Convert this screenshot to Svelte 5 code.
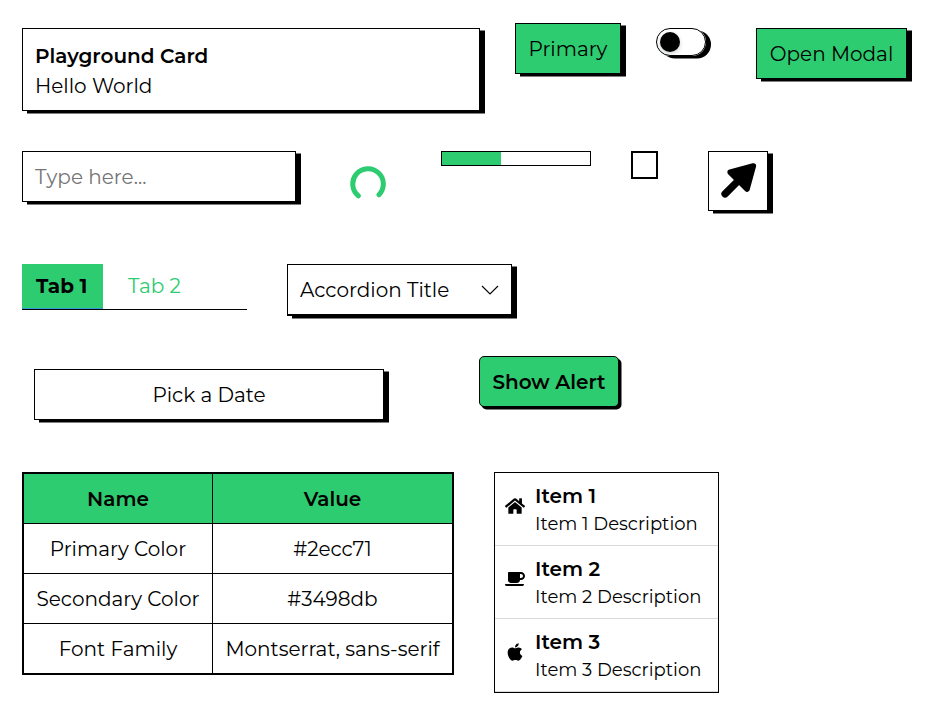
<script>
  const rows = [
    { name: 'Primary Color', value: '#2ecc71' },
    { name: 'Secondary Color', value: '#3498db' },
    { name: 'Font Family', value: 'Montserrat, sans-serif' }
  ];
  const items = [
    { title: 'Item 1', text: 'Item 1 Description' },
    { title: 'Item 2', text: 'Item 2 Description' },
    { title: 'Item 3', text: 'Item 3 Description' }
  ];
</script>

<main>
  <section class="row first">
    <article class="card shadow">
      <div><strong>Playground Card</strong></div>
      <div><span>Hello World</span></div>
    </article>
    <button class="primary shadow"><span>Primary</span></button>
    <div class="toggle shadow"><i></i></div>
    <button class="modal shadow"><span>Open Modal</span></button>
  </section>

  <section class="row second">
    <div class="input shadow"><span>Type here...</span></div>
    <svg class="spinner" width="36" height="36" viewBox="0 0 36 36">
      <path d="M8.3 29.8A15.3 15.3 0 1 1 29 28.7" fill="none" stroke="#2ecc71" stroke-width="5" stroke-linecap="round" />
    </svg>
    <div class="progress"><div></div></div>
    <div class="check"></div>
    <button class="icon shadow">
      <svg width="58" height="58" viewBox="1 1 58 58">
        <path d="M45.3 15L22.2 21.3L39 38Z" fill="#000" stroke="#000" stroke-width="5.6" stroke-linejoin="round" />
        <path d="M17.1 42.9L33 27" stroke="#000" stroke-width="7.4" stroke-linecap="round" />
      </svg>
    </button>
  </section>

  <section class="row third">
    <nav>
      <div class="tab active"><b>Tab 1</b></div>
      <div class="tab"><span>Tab 2</span></div>
    </nav>
    <div class="accordion shadow">
      <span>Accordion Title</span>
      <svg width="18" height="10" viewBox="0 0 18 10"><path d="M1 1L9 9L17 1" fill="none" stroke="#000" stroke-width="1.1" /></svg>
    </div>
  </section>

  <section class="row fourth">
    <button class="date shadow"><span>Pick a Date</span></button>
    <button class="alert"><strong>Show Alert</strong></button>
  </section>

  <section class="row">
    <table>
      <thead>
        <tr><th>Name</th><th>Value</th></tr>
      </thead>
      <tbody>
        {#each rows as row}
          <tr><td>{row.name}</td><td>{row.value}</td></tr>
        {/each}
      </tbody>
    </table>
    <div class="list">
      {#each items as item, i}
        <div class="item">
          {#if i === 0}
            <svg width="20" height="20" viewBox="0 0 576 512"><path d="M280.37 148.26L96 300.11V464a16 16 0 0 0 16 16l112.06-.29a16 16 0 0 0 15.92-16V368a16 16 0 0 1 16-16h64a16 16 0 0 1 16 16v95.64a16 16 0 0 0 16 16.05L464 480a16 16 0 0 0 16-16V300L295.67 148.26a12.19 12.19 0 0 0-15.3 0zM571.6 251.47L488 182.56V44.05a12 12 0 0 0-12-12h-56a12 12 0 0 0-12 12v72.61L318.47 43a48 48 0 0 0-61 0L4.34 251.47a12 12 0 0 0-1.6 16.9l25.5 31A12 12 0 0 0 45.15 301l235.22-193.74a12.19 12.19 0 0 1 15.3 0L530.9 301a12 12 0 0 0 16.9-1.6l25.5-31a12 12 0 0 0-1.7-16.93z" /></svg>
          {:else if i === 1}
            <svg width="20" height="20" viewBox="0 0 640 512"><path d="M192 384h192c53 0 96-43 96-96h32c70.6 0 128-57.4 128-128S582.6 32 512 32H120c-13.3 0-24 10.7-24 24v232c0 53 43 96 96 96zM512 96c35.3 0 64 28.7 64 64s-28.7 64-64 64h-32V96h32zm47.7 384H48.3c-47.6 0-61-64-36-64h583.3c25 0 11.8 64-35.9 64z" /></svg>
          {:else}
            <svg width="20" height="20" viewBox="0 0 384 512"><path d="M318.7 268.7c-.2-36.7 16.4-64.4 50-84.8-18.8-26.9-47.2-41.7-84.7-44.6-35.5-2.8-74.3 20.7-88.5 20.7-15 0-49.4-19.7-76.4-19.7C63.3 141.2 4 184.8 4 273.5q0 39.3 14.4 81.2c12.8 36.7 59 126.7 107.2 125.2 25.2-.6 43-17.9 75.8-17.9 31.8 0 48.3 17.9 76.4 17.9 48.6-.7 90.4-82.5 102.6-119.3-65.2-30.7-61.7-90-61.7-91.9zm-56.6-164.2c27.3-32.4 24.8-61.9 24-72.5-24.1 1.4-52 16.4-67.9 34.9-17.5 19.8-27.8 44.3-25.6 71.9 26.1 2 49.9-11.4 69.5-34.3z" /></svg>
          {/if}
          <div>
            <div class="title"><strong>{item.title}</strong></div>
            <div class="desc">{item.text}</div>
          </div>
        </div>
      {/each}
    </div>
  </section>
</main>

<style>
  :global(body) { background: #fff; }
  main {
    box-sizing: border-box;
    width: 927px;
    height: 709px;
    padding: 23px 0 0 22px;
    overflow: hidden;
    font: 400 20px/30px Montserrat, Inter, sans-serif;
    color: #000;
  }
  main * { box-sizing: border-box; }
  svg { display: block; flex: none; }
  span, strong, b, td, .desc { white-space: nowrap; }
  strong, th { font-weight: 600; }
  b { font-weight: 700; }
  button {
    display: flex;
    align-items: center;
    justify-content: center;
    padding: 0;
    font: inherit;
    color: #000;
    height: 51px;
    background: #2ecc71;
    border: 1px solid #000;
  }
  .row { display: flex; align-items: flex-start; }
  .first { height: 128px; }
  .second { height: 113px; }
  .third { height: 92px; }
  .fourth { height: 116px; }
  .shadow { border: 1px solid #000; box-shadow: 5px 2.5px 0 #000; }
  .card { width: 458px; height: 83px; margin-top: 5px; padding: 12px 12px 0; }
  .card > div { height: 30px; }
  .primary { width: 106px; margin-left: 35px; }
  .toggle { width: 50px; height: 28px; margin: 5px 0 0 35px; border-radius: 14px; padding: 3px; }
  .toggle i { display: block; width: 20px; height: 20px; border-radius: 50%; background: #000; box-shadow: 0 2px 4px rgba(0, 35, 11, 0.2); }
  .modal { width: 151px; margin: 5px 0 0 50px; }
  .input { width: 274px; height: 51px; padding: 10px 12px; color: #757575; }
  .spinner { margin: 15px 0 0 54px; }
  .progress { width: 150px; height: 15px; margin-left: 55px; border: 1px solid #000; }
  .progress div { width: 40%; height: 100%; background: #2ecc71; }
  .check { width: 27px; height: 28px; margin-left: 40px; border: 2px solid #000; }
  .icon { width: 60px; height: 60px; margin-left: 50px; background: #fff; }
  nav { display: flex; width: 225px; height: 46px; border-bottom: 1px solid #000; }
  .tab { height: 45px; padding: 7px 0 0 25px; color: #2ecc71; }
  .active { width: 81px; padding-left: 14px; color: #000; background: #2ecc71; border-bottom: 1px solid #3498db; }
  .accordion {
    display: flex;
    align-items: center;
    justify-content: space-between;
    width: 225px;
    height: 52px;
    margin-left: 40px;
    padding: 0 12px;
    border-bottom-width: 2px;
  }
  .date { width: 350px; margin: 13px 0 0 12px; background: #fff; }
  .alert { width: 140px; margin-left: 95px; height: 51px; border-radius: 5px; box-shadow: 2.5px 2.5px 0 #000; }
  table { width: 432px; height: 203px; border: 2px solid #000; border-spacing: 0; table-layout: fixed; }
  th, td { padding: 0; height: 50px; text-align: center; border-bottom: 1px solid #000; }
  th:first-child, td:first-child { width: 189px; border-right: 1px solid #000; }
  th { background: #2ecc71; }
  tbody tr:last-child td { border-bottom: 0; height: 49px; }
  .list { width: 225px; height: 221px; margin-left: 40px; border: 1px solid #000; }
  .item { display: flex; height: 73px; padding: 8px 10px 0; border-bottom: 1px solid #d9d9d9; }
  .item svg { margin: 15px 10px 0 0; }
  .title { height: 30px; }
  .desc { height: 27px; font-size: 18px; line-height: 27px; }
</style>
